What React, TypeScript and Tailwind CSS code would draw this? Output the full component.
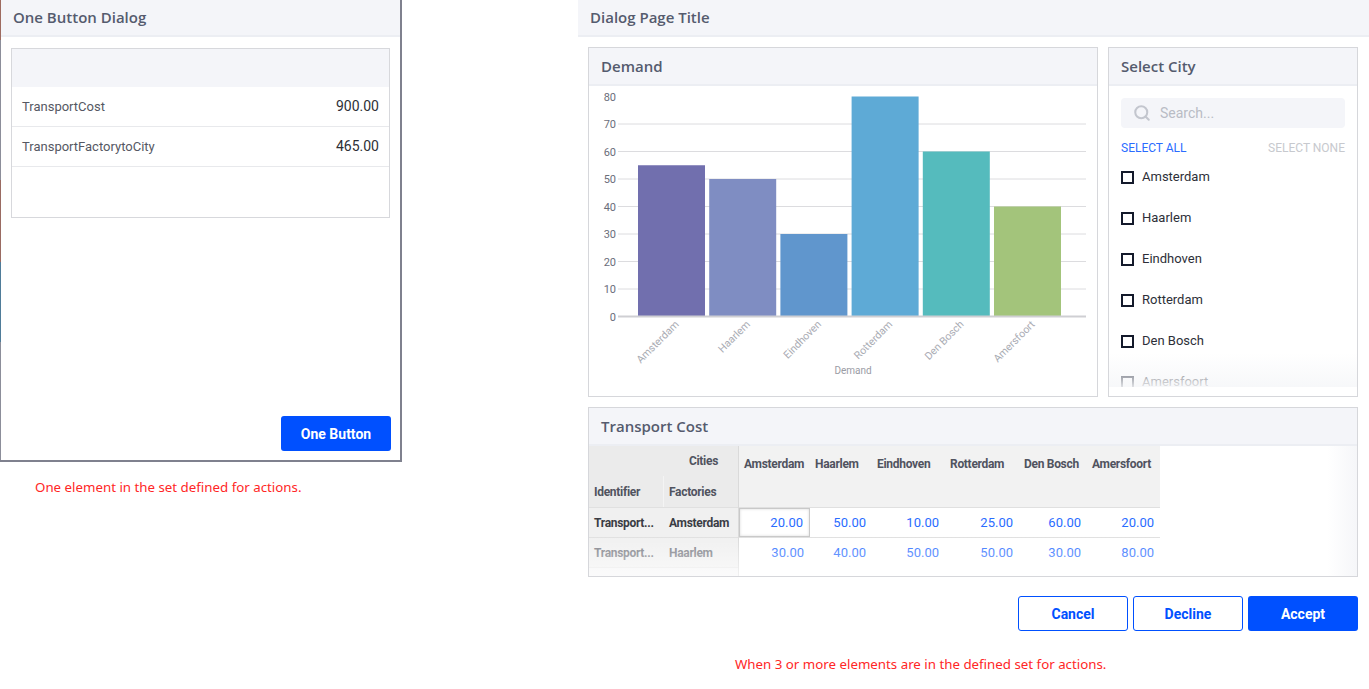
import { Search } from 'lucide-react';

const cities = ['Amsterdam', 'Haarlem', 'Eindhoven', 'Rotterdam', 'Den Bosch', 'Amersfoort'];

const demand = [
  { city: 'Amsterdam', value: 55, color: '#716fae' },
  { city: 'Haarlem', value: 50, color: '#7f8dc2' },
  { city: 'Eindhoven', value: 30, color: '#6096cd' },
  { city: 'Rotterdam', value: 80, color: '#5eaad6' },
  { city: 'Den Bosch', value: 60, color: '#55bbbd' },
  { city: 'Amersfoort', value: 40, color: '#a3c47b' },
];

const colWidths = ['w-[71px]', 'w-[62px]', 'w-[73px]', 'w-[74px]', 'w-[68px]', 'w-[73px]'];

const costRows = [
  { id: 'Transport...', factory: 'Amsterdam', values: ['20.00', '50.00', '10.00', '25.00', '60.00', '20.00'] },
  { id: 'Transport...', factory: 'Haarlem', values: ['30.00', '40.00', '50.00', '50.00', '30.00', '80.00'] },
];

const heading = "font-['Open_Sans',sans-serif] font-semibold text-[15px] text-[#555b6e]";
const roboto = "font-['Roboto',sans-serif]";

// =========================
// PANEL
// =========================
const Panel = ({ title, className, children }: { title: string; className?: string; children: React.ReactNode }) => (
  <div className={`border border-[#d6d7db] bg-white flex flex-col overflow-hidden ${className ?? ''}`}>
    <div className="h-[38px] shrink-0 bg-[#f4f5f9] border-b-2 border-[#eceef3] flex items-center px-3">
      <span className={heading}>{title}</span>
    </div>
    {children}
  </div>
);

// =========================
// DEMAND CHART
// =========================
const DemandChart = () => {
  const y = (v: number) => 230.5 - v * 2.75;
  return (
    <svg width="508" height="309" className="block">
      {[10, 20, 30, 40, 50, 60, 70].map((v) => (
        <line key={v} x1="29" x2="497" y1={y(v)} y2={y(v)} stroke="#dcdcdf" strokeWidth="1" />
      ))}
      {[0, 10, 20, 30, 40, 50, 60, 70, 80].map((v) => (
        <text key={v} x="27" y={y(v) + 4} textAnchor="end" fontSize="11" fill="#6b6e7a" fontFamily="Roboto, sans-serif">
          {v}
        </text>
      ))}
      {demand.map((d, i) => {
        const x = 49 + i * 71.2;
        return <rect key={d.city} x={x} y={y(d.value)} width="67" height={d.value * 2.75} fill={d.color} />;
      })}
      <line x1="29" x2="497" y1={y(0)} y2={y(0)} stroke="#cfcfd3" strokeWidth="2" />
      {demand.map((d, i) => {
        const cx = 49 + i * 71.2 + 33.5 + 8;
        return (
          <text
            key={d.city}
            x={cx}
            y="239"
            textAnchor="end"
            fontSize="10.5"
            fill="#a9abb3"
            fontFamily="Roboto, sans-serif"
            transform={`rotate(-45 ${cx} 239)`}
          >
            {d.city}
          </text>
        );
      })}
      <text x="264" y="288" textAnchor="middle" fontSize="10" fill="#9a9ca5" fontFamily="Roboto, sans-serif">
        Demand
      </text>
    </svg>
  );
};

// =========================
// SELECT CITY
// =========================
const SelectCity = () => (
  <div className="relative flex-1 px-3 pt-[12px] overflow-hidden">
    <div className="h-[30px] bg-[#f4f5f9] rounded-sm flex items-center pl-[12px] gap-[9px]">
      <Search className="w-[18px] h-[18px] text-[#c3c6ce]" strokeWidth={2.75} />
      <span className={`${roboto} text-[14px] text-[#b9bcc5]`}>Search...</span>
    </div>
    <div className={`${roboto} flex justify-between text-[12px] mt-[13px] leading-[14px]`}>
      <span className="text-[#2a6cff]">SELECT ALL</span>
      <span className="text-[#c7c9ce]">SELECT NONE</span>
    </div>
    <div className="mt-[6px] flex flex-col h-[252px] overflow-hidden">
      {cities.map((c) => (
        <div key={c} className="h-[41px] shrink-0 flex items-start gap-[8px] pt-[8px]">
          <span className="w-[13px] h-[13px] border-2 border-[#141a2b] mt-[2px] shrink-0" />
          <span className={`${roboto} text-[13px] text-[#2d2f38] leading-[16px]`}>{c}</span>
        </div>
      ))}
    </div>
    <div className="absolute left-0 right-0 bottom-[9px] h-[34px] bg-gradient-to-b from-white/0 to-[#f6f7f9]/90" />
    <div className="absolute left-0 right-0 bottom-0 h-[9px] bg-white" />
  </div>
);

// =========================
// TRANSPORT TABLE
// =========================
const TransportTable = () => (
  <div className={`relative flex flex-1 ${roboto}`}>
    <div className="w-[150px] flex flex-col bg-[#f0f0f0] border-r border-[#dadada]">
      <div className="h-[30px] bg-[#ebebeb] flex items-center justify-end pr-[20px] text-[12px] font-bold tracking-[-0.3px] text-[#50535f]">
        Cities
      </div>
      <div className="h-[31px] bg-[#ebebeb] flex text-[12px] font-bold tracking-[-0.3px] text-[#50535f]">
        <div className="w-[75px] flex items-center pl-[5px] border-r border-[#f4f4f4]">Identifier</div>
        <div className="flex items-center pl-[5px]">Factories</div>
      </div>
      {costRows.map((r, i) => (
        <div
          key={r.factory}
          className={`h-[30px] flex text-[12px] font-bold tracking-[-0.3px] border-t border-[#e0e0e0] ${
            i === 0 ? 'text-[#3a3c44]' : 'text-[#7c7e86]'
          }`}
        >
          <div className="w-[75px] flex items-center pl-[5px]">{r.id}</div>
          <div className="flex items-center pl-[5px]">{r.factory}</div>
        </div>
      ))}
      <div className="flex-1 border-t border-[#e6e6e6] bg-[#f4f4f5]" />
    </div>
    <div className="flex flex-col">
      <div className="h-[61px] bg-[#f2f2f2] flex">
        {cities.map((c, i) => (
          <div
            key={c}
            className={`${colWidths[i]} pl-[5px] pt-[9px] text-[12px] font-bold tracking-[-0.3px] text-[#50535f] whitespace-nowrap`}
          >
            {c}
          </div>
        ))}
      </div>
      {costRows.map((r, ri) => (
        <div key={r.factory} className="h-[30px] flex border-t border-[#e0e0e0]">
          {r.values.map((v, i) => (
            <div
              key={i}
              className={`${colWidths[i]} flex items-center justify-end pr-[6px] text-[13px] text-[#2a6cff] ${
                ri === 0 && i === 0 ? 'border border-[#c9c9c9] shadow-[inset_0_0_3px_rgba(0,0,0,0.15)]' : ''
              }`}
            >
              {v}
            </div>
          ))}
        </div>
      ))}
    </div>
    <div className="absolute left-0 right-0 bottom-0 h-[40px] bg-gradient-to-b from-white/0 to-white/60 pointer-events-none" />
    <div className="absolute top-0 bottom-0 right-0 w-[30px] bg-gradient-to-r from-white/0 to-[#f3f4f7]/80 pointer-events-none" />
  </div>
);

export default function App() {
  return (
    <div className="w-[1369px] h-[689px] bg-white flex overflow-hidden">
      {/* ONE BUTTON DIALOG */}
      <div className="w-[402px] flex flex-col">
        <div className="h-[462px] flex border-r-2 border-b-2 border-[#7f818e]">
          <div className="w-px flex flex-col">
            <div className="h-[40px] bg-[#9e6b60]" />
            <div className="h-[140px] bg-[#8c8e9a]" />
            <div className="h-[82px] bg-[#9a6b62]" />
            <div className="h-[80px] bg-[#4f7c99]" />
            <div className="flex-1 bg-[#8c8e9a]" />
          </div>
          <div className="flex-1 flex flex-col">
            <div className="h-[37px] bg-[#f4f5f9] border-b-2 border-[#eceef3] flex items-center pl-[12px]">
              <span className={heading}>One Button Dialog</span>
            </div>
            <div className="px-[10px] pt-[11px]">
              <div className={`h-[170px] border border-[#d7d8dc] flex flex-col ${roboto}`}>
                <div className="h-[38px] bg-[#f4f5f9]" />
                {[
                  ['TransportCost', '900.00'],
                  ['TransportFactorytoCity', '465.00'],
                ].map(([k, v]) => (
                  <div key={k} className="h-[40px] flex items-center justify-between px-[10px] border-b border-[#e8e9ec]">
                    <span className="text-[13px] text-[#555863]">{k}</span>
                    <span className="text-[14px] text-[#2d2f36]">{v}</span>
                  </div>
                ))}
              </div>
            </div>
            <div className="flex-1" />
            <div className="flex justify-end pr-[9px] pb-[9px]">
              <button className={`${roboto} w-[110px] h-[35px] bg-[#0050ff] rounded-[3px] text-white font-bold text-[14px] pt-[2px]`}>
                One Button
              </button>
            </div>
          </div>
        </div>
        <p className="mt-[16px] pl-[35px] text-[13.3px] text-[#ff2626] font-['Noto_Sans',sans-serif]">
          One element in the set defined for actions.
        </p>
      </div>

      {/* DIALOG PAGE */}
      <div className="ml-[176px] flex-1 flex flex-col">
        <div className="h-[37px] bg-[#f4f5f9] border-b-2 border-[#eceef3] flex items-center pl-[12px]">
          <span className={heading}>Dialog Page Title</span>
        </div>
        <div className="pl-[10px] pr-[11px] pt-[10px] flex flex-col">
          <div className="flex gap-[10px] h-[350px]">
            <Panel title="Demand" className="w-[510px]">
              <DemandChart />
            </Panel>
            <Panel title="Select City" className="flex-1">
              <SelectCity />
            </Panel>
          </div>
          <Panel title="Transport Cost" className="mt-[10px] h-[170px]">
            <TransportTable />
          </Panel>
          <div className="flex justify-end gap-[5px] mt-[19px]">
            <button className={`${roboto} w-[110px] h-[35px] border border-[#0050ff] rounded-[3px] text-[#0050ff] font-bold text-[14px] pt-[2px]`}>
              Cancel
            </button>
            <button className={`${roboto} w-[110px] h-[35px] border border-[#0050ff] rounded-[3px] text-[#0050ff] font-bold text-[14px] pt-[2px]`}>
              Decline
            </button>
            <button className={`${roboto} w-[110px] h-[35px] bg-[#0050ff] rounded-[3px] text-white font-bold text-[14px] pt-[2px]`}>
              Accept
            </button>
          </div>
          <p className="mt-[24px] pl-[147px] text-[13.3px] text-[#ff2626] font-['Noto_Sans',sans-serif]">
            When 3 or more elements are in the defined set for actions.
          </p>
        </div>
      </div>
    </div>
  );
}
